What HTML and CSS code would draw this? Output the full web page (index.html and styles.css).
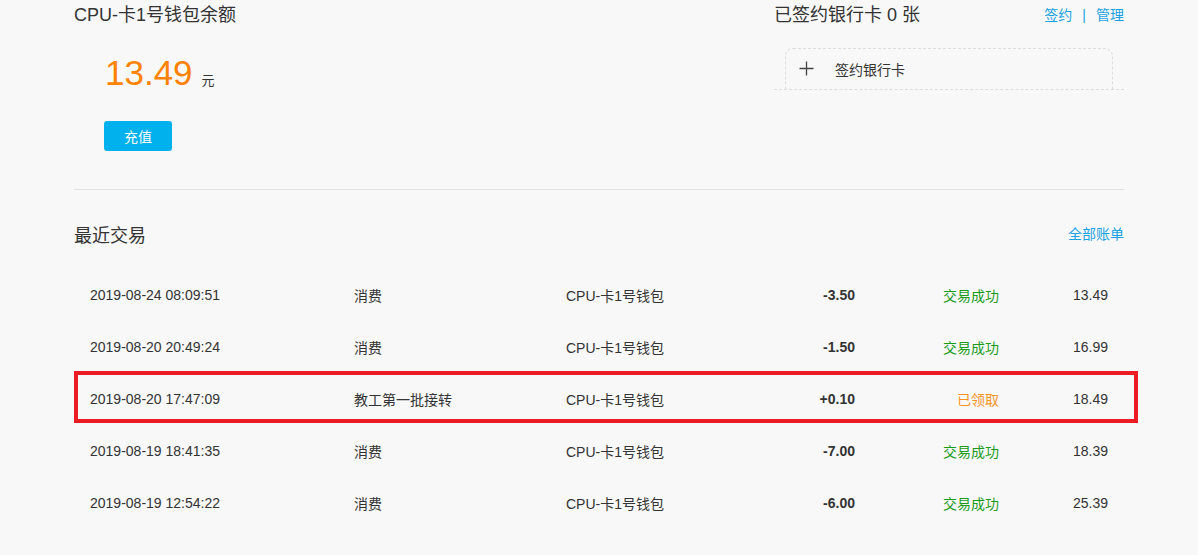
FILE: index.html
```html
<!DOCTYPE html>
<html lang="zh-CN">
  <head>
    <meta charset="UTF-8" />
    <meta name="viewport" content="width=device-width, initial-scale=1.0" />
    <title>钱包</title>
    <link rel="stylesheet" href="styles.css">
  </head>
  <body>
    <div class="page">
      <div class="summary">
        <div class="wallet">
          <h2>CPU-卡1号钱包余额</h2>
          <div class="balance">
            <span class="num">13.49</span>
            <span class="unit">元</span>
          </div>
          <button class="btn">充值</button>
        </div>

        <div class="cards">
          <div class="cards-head">
            <h2>已签约银行卡 0 张</h2>
            <div class="links">
              <a href="#">签约</a>
              <span class="sep">|</span>
              <a href="#">管理</a>
            </div>
          </div>
          <div class="card-wrap">
            <div class="card-add">
              <svg class="plus" width="15" height="15" viewBox="0 0 15 15">
                <path d="M7.5 0.5v14M0.5 7.5h14" stroke="#444" stroke-width="1.3" fill="none" />
              </svg>
              <span>签约银行卡</span>
            </div>
          </div>
        </div>
      </div>

      <div class="recent">
        <div class="recent-head">
          <h2>最近交易</h2>
          <a href="#">全部账单</a>
        </div>

        <div class="list">
          <div class="row">
            <span>2019-08-24 08:09:51</span>
            <span>消费</span>
            <span>CPU-卡1号钱包</span>
            <span class="amt">-3.50</span>
            <span class="status ok">交易成功</span>
            <span class="bal">13.49</span>
          </div>
          <div class="row">
            <span>2019-08-20 20:49:24</span>
            <span>消费</span>
            <span>CPU-卡1号钱包</span>
            <span class="amt">-1.50</span>
            <span class="status ok">交易成功</span>
            <span class="bal">16.99</span>
          </div>
          <div class="row marked">
            <span>2019-08-20 17:47:09</span>
            <span>教工第一批接转</span>
            <span>CPU-卡1号钱包</span>
            <span class="amt">+0.10</span>
            <span class="status got">已领取</span>
            <span class="bal">18.49</span>
          </div>
          <div class="row">
            <span>2019-08-19 18:41:35</span>
            <span>消费</span>
            <span>CPU-卡1号钱包</span>
            <span class="amt">-7.00</span>
            <span class="status ok">交易成功</span>
            <span class="bal">18.39</span>
          </div>
          <div class="row">
            <span>2019-08-19 12:54:22</span>
            <span>消费</span>
            <span>CPU-卡1号钱包</span>
            <span class="amt">-6.00</span>
            <span class="status ok">交易成功</span>
            <span class="bal">25.39</span>
          </div>
        </div>
      </div>
    </div>
  </body>
</html>
```

FILE: styles.css
```css
* {
  box-sizing: border-box;
  margin: 0;
  padding: 0;
}

body {
  font-family: "Liberation Sans", "Noto Sans CJK SC", sans-serif;
  background: #f8f8f8;
  color: #333;
  font-size: 14px;
}

a {
  color: #1ba1e2;
  text-decoration: none;
}

.page {
  width: 1050px;
  margin-left: 74px;
}

h2 {
  font-size: 18px;
  font-weight: normal;
  line-height: 30px;
  color: #333;
}

.summary {
  display: flex;
  justify-content: space-between;
  padding-bottom: 38px;
  border-bottom: 1px solid #e2e2e2;
}

.balance {
  margin-top: 23px;
  padding-left: 31px;
  display: flex;
  align-items: baseline;
  height: 40px;
}

.num {
  font-size: 35px;
  line-height: 40px;
  color: #ff8200;
}

.unit {
  font-size: 13px;
  margin-left: 9px;
}

.btn {
  margin-top: 28px;
  margin-left: 30px;
  width: 68px;
  height: 30px;
  border: none;
  border-radius: 3px;
  background: #00b1ee;
  color: white;
  font-family: inherit;
  font-size: 14px;
}

.cards {
  width: 350px;
}

.cards-head {
  display: flex;
  justify-content: space-between;
  align-items: center;
}

.links {
  font-size: 14px;
  display: flex;
  gap: 10px;
  line-height: 30px;
}

.sep {
  color: #1ba1e2;
}

.card-wrap {
  margin-top: 18px;
  border-bottom: 1px dashed #ddd;
}

.card-add {
  margin: 0 11px;
  height: 41px;
  border: 1px dashed #ddd;
  border-bottom: none;
  border-radius: 8px 8px 0 0;
  display: flex;
  align-items: center;
  font-size: 14px;
}

.plus {
  margin-left: 13px;
  margin-right: 21px;
  margin-top: -2px;
}

.recent-head {
  margin-top: 31px;
  display: flex;
  justify-content: space-between;
  align-items: center;
}

.recent-head a {
  font-size: 14px;
  margin-top: -6px;
}

.list {
  margin-top: 18px;
}

.row {
  position: relative;
  display: grid;
  grid-template-columns: 264px 212px 169px 120px 144px 109px;
  align-items: center;
  height: 52px;
  padding: 0 16px;
  font-size: 14px;
}

.amt {
  text-align: right;
  font-weight: bold;
}

.status,
.bal {
  text-align: right;
}

.ok {
  color: #1a9a1a;
}

.got {
  color: #f7931e;
}

.marked::after {
  content: "";
  position: absolute;
  left: 0;
  right: -14px;
  top: -2px;
  bottom: 2px;
  border: 4px solid #ed1c24;
}
```
